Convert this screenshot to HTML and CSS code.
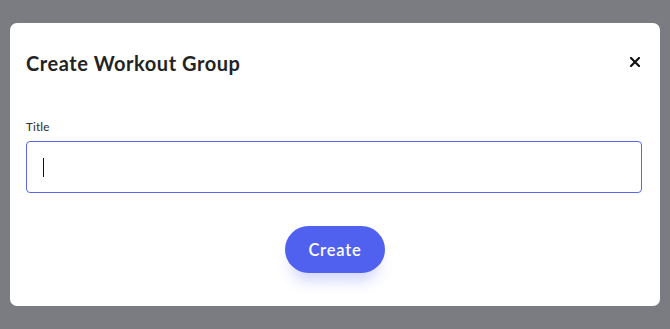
FILE: index.html
```html
<!DOCTYPE html>
<html lang="en">
<head>
<meta charset="utf-8">
<title>Create Workout Group</title>
<link rel="stylesheet" href="styles.css">
</head>
<body>
<div class="overlay">
  <div class="modal">
    <div class="modal-header">
      <h2 class="modal-title">Create Workout Group</h2>
      <button class="close-btn" aria-label="Close">
        <svg width="10" height="10" viewBox="0 0 10 10"><path d="M1 1L9 9M9 1L1 9" stroke="#111" stroke-width="2.2" stroke-linecap="square"/></svg>
      </button>
    </div>
    <label class="field-label">Title</label>
    <div class="text-input" role="textbox"><span class="caret"></span></div>
    <div class="actions">
      <button class="create-btn">Create</button>
    </div>
  </div>
</div>
</body>
</html>
```
FILE: styles.css
```css
html, body {
  margin: 0;
  padding: 0;
  height: 100%;
}
body {
  background: #7b7c81;
  font-family: "Lato", "Noto Sans", sans-serif;
}
.overlay {
  padding: 23px 10px 0 10px;
}
.modal {
  background: #ffffff;
  border-radius: 7px;
  padding: 24px 18px 33px 16px;
  display: flex;
  flex-direction: column;
}
.modal-header {
  height: 32px;
  display: flex;
  align-items: center;
  justify-content: space-between;
}
.modal-title {
  margin: 0;
  font-size: 20px;
  font-weight: 700;
  color: #232323;
  letter-spacing: 0.55px;
  line-height: 24px;
  margin-top: -1px;
}
.close-btn {
  border: 0;
  background: transparent;
  padding: 0;
  width: 10px;
  height: 10px;
  display: flex;
  margin-right: 2px;
  margin-top: -3px;
}
.field-label {
  margin-top: 41px;
  font-size: 11.5px;
  line-height: 14px;
  color: #333;
  font-weight: 500;
  letter-spacing: 0.2px;
}
.text-input {
  margin-top: 7px;
  height: 50px;
  border: 1px solid #5a67ea;
  border-radius: 4px;
  padding-left: 16px;
  display: flex;
  align-items: center;
}
.caret {
  width: 1px;
  height: 19px;
  background: #111;
}
.actions {
  margin-top: 33px;
  display: flex;
  justify-content: center;
  padding-left: 2px;
}
.create-btn {
  width: 100px;
  height: 47px;
  border: 0;
  border-radius: 24px;
  background: #5061f0;
  color: #fff;
  font-family: "Lato", "Noto Sans", sans-serif;
  font-size: 16.5px;
  font-weight: 600;
  letter-spacing: 0.8px;
  padding: 0;
  box-shadow: 0 14px 14px -6px rgba(80, 97, 240, 0.25);
}
```
